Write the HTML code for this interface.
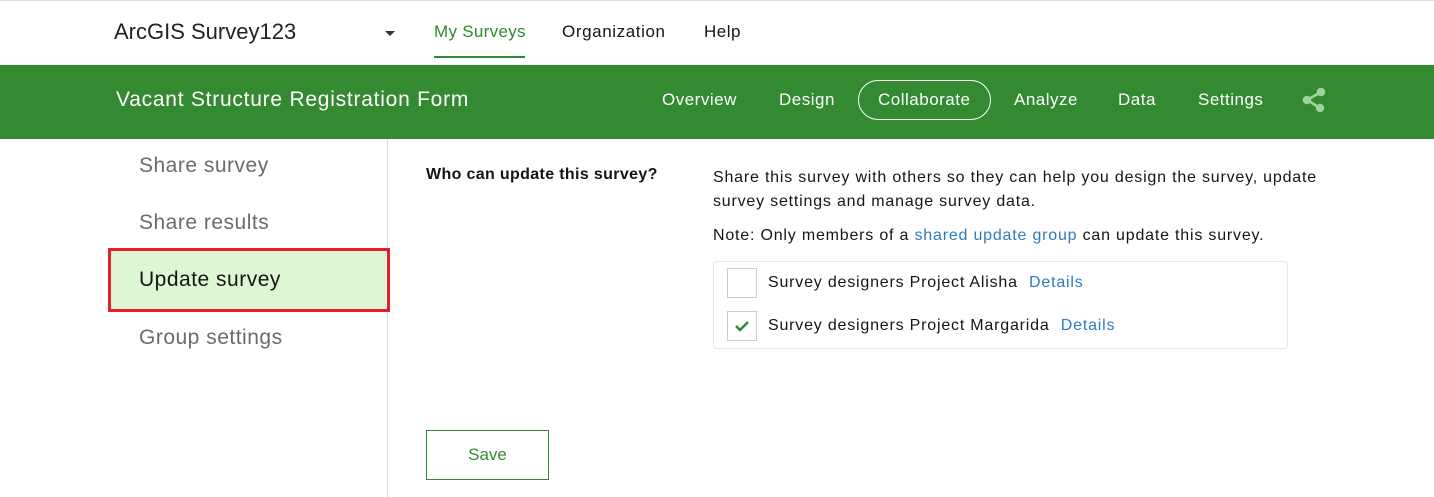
<!DOCTYPE html>
<html><head><meta charset="utf-8"><style>
*{margin:0;padding:0;box-sizing:border-box}
body{width:1434px;height:497px;overflow:hidden;background:#fff;font-family:"Liberation Sans",sans-serif;position:relative;color:#151515}
.a{position:absolute;white-space:nowrap}
.n{font-size:17px;color:#fff;letter-spacing:0.5px}
.t{font-size:16px;letter-spacing:0.8px}
.s{font-size:21px;color:#6b6b6b;letter-spacing:0.5px}
</style></head><body>
<div class="a" style="left:0;top:0;width:1434px;height:1px;background:#ddd"></div>
<div class="a" style="left:114px;top:19px;font-size:22px;color:#222">ArcGIS Survey123</div>
<div class="a" style="left:385px;top:31px;width:0;height:0;border-left:5px solid transparent;border-right:5px solid transparent;border-top:5px solid #333"></div>
<div class="a" style="left:434px;top:22px;font-size:17px;color:#2f8a2f;letter-spacing:0.3px">My Surveys</div>
<div class="a" style="left:434px;top:56px;width:91px;height:2px;background:#2f8a2f"></div>
<div class="a" style="left:562px;top:22px;font-size:17px;letter-spacing:0.6px">Organization</div>
<div class="a" style="left:704px;top:22px;font-size:17px;letter-spacing:0.5px">Help</div>
<div class="a" style="left:0;top:65px;width:1434px;height:74px;background:#338a31"></div>
<div class="a" style="left:116px;top:88px;font-size:21px;color:#fff;letter-spacing:0.75px">Vacant Structure Registration Form</div>
<div class="a n" style="left:662px;top:90px">Overview</div>
<div class="a n" style="left:779px;top:90px">Design</div>
<div class="a" style="left:858px;top:80px;width:133px;height:40px;border:1px solid #fff;border-radius:20px"></div>
<div class="a n" style="left:878px;top:90px">Collaborate</div>
<div class="a n" style="left:1014px;top:90px">Analyze</div>
<div class="a n" style="left:1118px;top:90px">Data</div>
<div class="a n" style="left:1198px;top:90px">Settings</div>
<svg class="a" style="left:1300px;top:88px" width="28" height="26" viewBox="0 0 28 26"><g stroke="#9fd39c" stroke-width="2.5" fill="#9fd39c"><line x1="7" y1="12" x2="21" y2="4"/><line x1="7" y1="12" x2="20" y2="20"/><circle cx="7" cy="12" r="3"/><circle cx="21" cy="4" r="3"/><circle cx="20" cy="20" r="3"/></g></svg>
<div class="a" style="left:387px;top:139px;width:1px;height:358px;background:#ddd"></div>
<div class="a s" style="left:139px;top:154px">Share survey</div>
<div class="a s" style="left:139px;top:211px">Share results</div>
<div class="a" style="left:108px;top:248px;width:282px;height:64px;border:3px solid #e4202a;background:#dff6d4"></div>
<div class="a s" style="left:139px;top:268px;color:#151515">Update survey</div>
<div class="a s" style="left:139px;top:326px">Group settings</div>
<div class="a" style="left:426px;top:166px;font-size:16px;font-weight:bold;letter-spacing:0.35px">Who can update this survey?</div>
<div class="a t" style="left:713px;top:166px;line-height:24px">Share this survey with others so they can help you design the survey, update<br>survey settings and manage survey data.</div>
<div class="a t" style="left:713px;top:227px">Note: Only members of a <span style="color:#2e7bbd">shared update group</span> can update this survey.</div>
<div class="a" style="left:713px;top:261px;width:575px;height:88px;border:1px solid #e5e5e5;border-radius:4px"></div>
<div class="a" style="left:727px;top:268px;width:30px;height:30px;border:1px solid #ccc"></div>
<div class="a t" style="left:768px;top:274px">Survey designers Project Alisha <span style="color:#2e7bbd;margin-left:6px">Details</span></div>
<div class="a" style="left:727px;top:311px;width:30px;height:30px;border:1px solid #ccc"></div>
<svg class="a" style="left:733px;top:317px" width="18" height="18" viewBox="0 0 18 18"><path d="M3 9l4 4 8-8" stroke="#2f8a2f" stroke-width="2.5" fill="none"/></svg>
<div class="a t" style="left:768px;top:317px">Survey designers Project Margarida <span style="color:#2e7bbd;margin-left:6px">Details</span></div>
<div class="a" style="left:426px;top:430px;width:123px;height:50px;border:1px solid #338a31"></div>
<div class="a" style="left:426px;top:445px;width:123px;text-align:center;font-size:17px;color:#338a31">Save</div>
</body></html>
